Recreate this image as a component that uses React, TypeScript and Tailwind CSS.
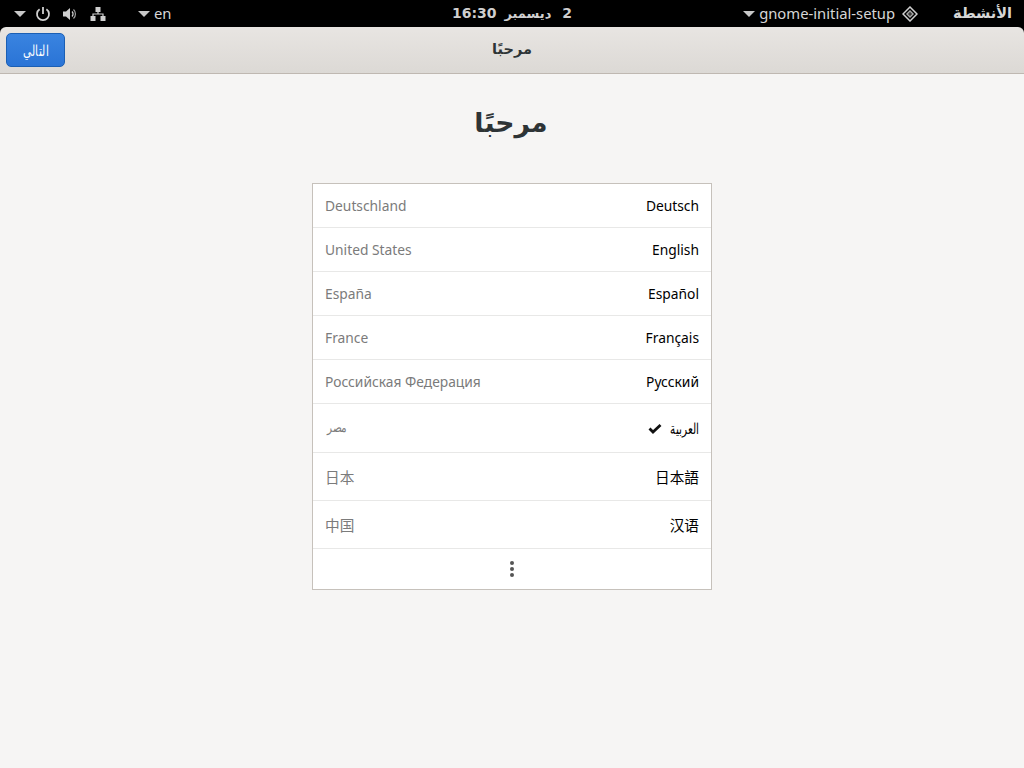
import React from "react";

const rows = [
  { l: "Deutschland", r: "Deutsch", h: "h-[44px]" },
  { l: "United States", r: "English", h: "h-[44px]" },
  { l: "España", r: "Español", h: "h-[44px]" },
  { l: "France", r: "Français", h: "h-[44px]" },
  { l: "Российская Федерация", r: "Русский", h: "h-[44px]" },
  { l: "مصر", r: "العربية", h: "h-[49px]", check: true, ar: true },
  { l: "日本", r: "日本語", h: "h-[48px]", cjk: true },
  { l: "中国", r: "汉语", h: "h-[48px]", cjk: true },
];

function Caret() {
  return <span className="w-0 h-0 border-l-[6px] border-r-[6px] border-t-[6px] border-l-transparent border-r-transparent border-t-[#c8c8c8] block" />;
}

export default function App() {
  return (
    <div className="w-[1024px] h-[768px] overflow-hidden flex flex-col bg-black font-['Noto_Sans','Noto_Sans_CJK_SC',sans-serif]">
      <div className="h-[27px] shrink-0 bg-black flex items-center text-[#d6d6d6] text-[14.8px] relative">
        <div className="ml-[14px] flex items-center">
          <Caret />
          <svg className="ml-[9px]" width="16" height="16" viewBox="0 0 16 16" fill="none" stroke="#d0d0d0" strokeWidth="1.8">
            <path d="M4.6 3.2A6 6 0 1 0 11.4 3.2" />
            <path d="M8 1v7" />
          </svg>
          <svg className="ml-[11px]" width="16" height="16" viewBox="0 0 16 16" fill="none">
            <path d="M1 5.5h3L8 2v12L4 10.5H1z" fill="#d0d0d0" />
            <path d="M10 5.5a3.5 3.5 0 0 1 0 5" stroke="#d0d0d0" strokeWidth="1.3" />
            <path d="M11.5 3.5a6.2 6.2 0 0 1 0 9" stroke="#a0a0a0" strokeWidth="1.2" />
          </svg>
          <svg className="ml-[12px]" width="16" height="16" viewBox="0 0 16 16" fill="none">
            <rect x="5.5" y="1" width="5" height="5" fill="#d0d0d0" />
            <rect x="0.5" y="10" width="5" height="5" fill="#d0d0d0" />
            <rect x="10.5" y="10" width="5" height="5" fill="#d0d0d0" />
            <path d="M8 6v2M3 10V8h10v2" stroke="#d0d0d0" strokeWidth="1.2" />
          </svg>
          <span className="ml-[32px]"><Caret /></span>
          <span className="ml-[4px]">en</span>
        </div>
        <div className="absolute left-[452px] top-0 h-[27px] flex items-center whitespace-nowrap font-['DejaVu_Sans',sans-serif] font-bold text-[14px] tracking-[0.7px] [word-spacing:3px] text-[#cfcfcf]">
          <span dir="rtl">
            2 <span className="text-[13px] mr-[3px]">ديسمبر</span> 16:30
          </span>
        </div>
        <div className="ml-auto flex items-center mr-[12px]">
          <Caret />
          <span className="ml-[4px]">gnome-initial-setup</span>
          <svg className="ml-[7px]" width="16" height="16" viewBox="0 0 16 16" fill="none">
            <path d="M8 1l7 7-7 7-7-7z" stroke="#d0d0d0" strokeWidth="1.5" />
            <path d="M8 4l4 4-4 4-4-4z" fill="#a8a8a8" />
            <path d="M6 8h4M8 6v4" stroke="#000" strokeWidth="0.8" />
          </svg>
          <span className="ml-[35px] font-['DejaVu_Sans',sans-serif] font-bold text-[14.5px]" dir="rtl">الأنشطة</span>
        </div>
      </div>

      <div className="h-[47px] shrink-0 rounded-t-[6px] bg-gradient-to-b from-[#e8e5e2] to-[#dcd9d5] border-b border-[#bfb8b1] flex items-center relative">
        <button className="ml-[6px] w-[59px] h-[34px] rounded-[5px] bg-gradient-to-b from-[#3a84e0] to-[#2a74d6] border border-[#1b5fb4] text-white text-[15px] flex items-center justify-center" dir="rtl">
          <span className="inline-block scale-x-[0.7]">التالي</span>
        </button>
        <div className="absolute inset-x-0 top-0 h-full flex items-center justify-center font-['DejaVu_Sans',sans-serif] font-bold text-[14.5px] text-[#2e3436]" dir="rtl">
          مرحبًا
        </div>
      </div>

      <div className="flex-1 bg-[#f6f5f4] flex flex-col items-center">
        <h1 className="mt-[28px] mr-[2px] h-[42px] flex items-center font-['DejaVu_Sans',sans-serif] font-bold text-[26.7px] text-[#2e3436]" dir="rtl">مرحبًا</h1>
        <div className="mt-[39px] w-[400px] border border-[#c6c1bb] bg-white text-[13.8px]">
          {rows.map((x) => (
            <div key={x.r} className={`${x.h} flex items-center justify-between px-[12px] border-b border-[#e8e8e7]`}>
              <span className={`text-[#7b7b7b] ${x.ar ? "text-[13px] inline-block scale-x-[0.8] origin-left ml-[2px]" : x.cjk ? "text-[14.67px] pt-[1px]" : "pt-[2px]"}`}>{x.l}</span>
              <span className="flex items-center text-black">
                {x.check && (
                  <svg className="mr-[9px]" width="14" height="14" viewBox="0 0 14 14">
                    <path d="M1.5 7.5l3.5 3.5L12.5 4" fill="none" stroke="#111" strokeWidth="2.8" />
                  </svg>
                )}
                <span className={x.ar ? "text-[15px] inline-block scale-x-[0.7] origin-right -ml-[13px]" : x.cjk ? "text-[14.67px] pt-[1px]" : "pt-[2px]"}>{x.r}</span>
              </span>
            </div>
          ))}
          <div className="h-[40px] flex items-center justify-center">
            <svg width="6" height="18" viewBox="0 0 6 18" fill="#555">
              <circle cx="3" cy="3" r="2" />
              <circle cx="3" cy="9" r="2" />
              <circle cx="3" cy="15" r="2" />
            </svg>
          </div>
        </div>
      </div>
    </div>
  );
}
